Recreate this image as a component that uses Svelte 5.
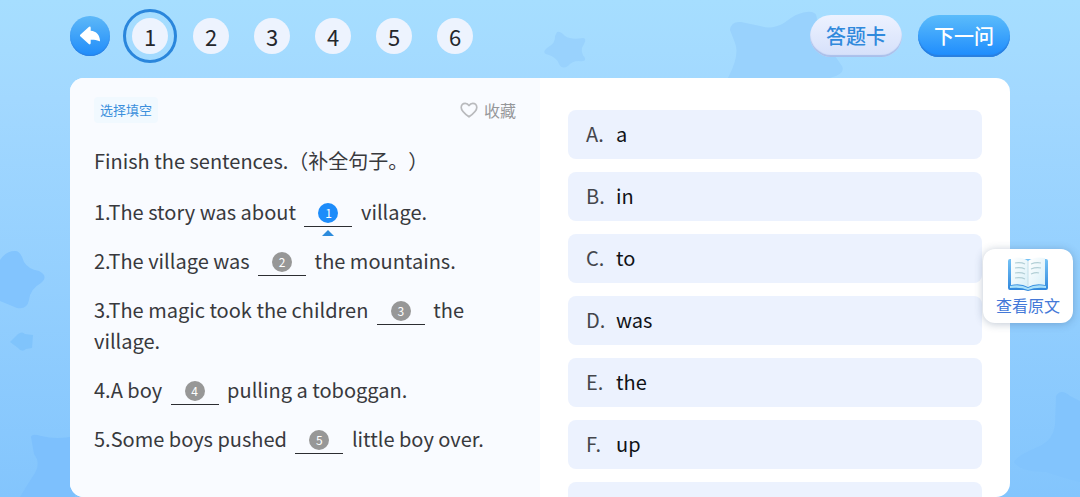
<script>
  const questions = [1, 2, 3, 4, 5, 6];
  let current = $state(1);
  let blank = $state(1);

  const sentences = [
    { id: 1, before: '1.The story was about', after: 'village.' },
    { id: 2, before: '2.The village was', after: 'the mountains.' },
    { id: 3, before: '3.The magic took the children', after: 'the village.' },
    { id: 4, before: '4.A boy', after: 'pulling a toboggan.' },
    { id: 5, before: '5.Some boys pushed', after: 'little boy over.' }
  ];

  const options = [
    ['A.', 'a'],
    ['B.', 'in'],
    ['C.', 'to'],
    ['D.', 'was'],
    ['E.', 'the'],
    ['F.', 'up'],
    ['', '']
  ];
</script>

<div class="page">
  <svg class="sky" viewBox="0 0 1080 497" preserveAspectRatio="none" aria-hidden="true">
    <g fill="#99d2fd">
      <path d="M557 32Q560 31 565 36Q571 40 583 38Q587 38 584 44Q579 51 585 58Q586 62 579 61Q572 61 568 66Q562 70 559 64Q557 57 546 54Q542 52 547 48Q556 43 555 36Z" />
      <path d="M730 30Q731 21 741 22L760 26Q772 30 784 23Q800 10 812 12Q820 14 815 28L842 66Q846 74 830 78H728Q740 55 735 43Z" />
    </g>
    <path fill="#82c4fe" d="M0 260Q7 250 16 251Q21 252 24 262Q28 269 39 271Q49 276 41 283Q30 289 29 300Q27 310 17 308L0 301Z" />
    <path fill="#80c4fc" d="M18 334Q22 331 25 334L33 335L32 348L26 349Q22 353 18 348L10 342Z" />
    <path fill="#7dc0fd" d="M31 437Q32 433 41 436Q57 440 75 436V497H20Q29 482 35 473Q41 463 34 454Z" />
    <path fill="#82c4fd" d="M1056 396Q1061 388 1070 396L1080 401V482Q1060 477 1046 472Q1020 472 1014 462Q1016 456 1040 446Q1053 440 1055 425Z" />
  </svg>

  <header>
    <button class="back" aria-label="返回">
      <svg viewBox="0 0 24 20" width="24" height="20">
        <path d="M10.800 .9Q12.600-.2 12.700 1.800V4.800C18.500 5.200 21.600 9 22 14.400Q22 15.600 21 15.100C18.500 13.900 16 13.600 12.700 13.700V17Q12.600 19.200 10.800 18.100L2.500 10.600Q1.400 9.500 2.500 8.400Z" fill="#fff" />
      </svg>
    </button>
    <nav>
      {#each questions as n}
        <button class="num" class:active={current === n} onclick={() => (current = n)}>{n}</button>
      {/each}
    </nav>
    <button class="pill card">答题卡</button>
    <button class="pill next">下一问</button>
  </header>

  <main>
    <section class="question">
      <div class="meta">
        <span class="tag">选择填空</span>
        <button class="fav">
          <svg viewBox="0 0 18 16" width="18" height="16">
            <path d="M9 14.800C5 12 1.200 9 1.200 5.500C1.200 3 3 1.300 5.200 1.300C6.900 1.300 8.200 2.200 9 3.600C9.800 2.200 11.100 1.300 12.800 1.300C15 1.300 16.800 3 16.800 5.500C16.800 9 13 12 9 14.800Z" fill="none" stroke="#b9babd" stroke-width="1.700" stroke-linejoin="round" />
          </svg>
          收藏
        </button>
      </div>
      <h1>Finish the sentences.（补全句子。）</h1>
      {#each sentences as s}
        <p>
          {s.before}
          <button class="blank" class:active={blank === s.id} onclick={() => (blank = s.id)}><span>{s.id}</span></button>
          {s.after}
        </p>
      {/each}
    </section>

    <section class="answers">
      {#each options as [letter, word]}
        <button class="option"><span class="letter">{letter}</span><span>{word}</span></button>
      {/each}
    </section>
  </main>

  <button class="source">
    <svg viewBox="0 0 42 34" width="42" height="34">
      <defs>
        <linearGradient id="cover" x1="0" y1="0" x2="0" y2="1">
          <stop offset="0" stop-color="#75c2f5" />
          <stop offset="1" stop-color="#2e86dc" />
        </linearGradient>
        <linearGradient id="leaf" x1="0" y1="0" x2="1" y2="1">
          <stop offset="0" stop-color="#ffffff" />
          <stop offset="1" stop-color="#d9f0f8" />
        </linearGradient>
      </defs>
      <path d="M1 4Q1 2 3 2H39Q41 2 41 4V31Q41 33 39 33H25L21 34L17 33H3Q1 33 1 31Z" fill="url(#cover)" />
      <path d="M3 29Q14 27 21 31Q28 27 39 29V31Q28 30 21 33Q14 30 3 31Z" fill="#a9e1fa" />
      <path d="M4 1Q15-1 21 4V30Q14 26 4 28Z" fill="url(#leaf)" />
      <path d="M38 1Q27-1 21 4V30Q28 26 38 28Z" fill="url(#leaf)" />
      <path d="M21 4V30" stroke="#c5e0ea" />
      <path d="M8 6Q14 5 18 7M8 11Q14 10 18 12M8 16Q14 15 18 17M8 21Q14 20 18 22M24 7Q29 5 34 6M24 12Q29 10 34 11M24 17Q29 15 32 16" fill="none" stroke="#b2cfd6" stroke-width="1.200" />
    </svg>
    查看原文
  </button>
</div>

<style>
  :global(body) {
    margin: 0;
  }
  .page {
    position: relative;
    box-sizing: border-box;
    height: 100vh;
    display: flex;
    flex-direction: column;
    padding: 0 70px;
    overflow: hidden;
    background: linear-gradient(#a6deff 0%, #a2d8ff 20%, #83c5fd 100%);
    font-family: "Noto Sans CJK SC", sans-serif;
    color: #38393d;
  }
  button {
    border: 0;
    padding: 0;
    background: none;
    font: inherit;
    color: inherit;
    cursor: pointer;
  }
  .sky {
    position: absolute;
    inset: 0;
    width: 100%;
    height: 100%;
  }
  header {
    position: relative;
    display: flex;
    align-items: center;
    padding-bottom: 6px;
    height: 72px;
    flex: none;
  }
  .back {
    display: grid;
    place-items: center;
    width: 40px;
    height: 40px;
    border-radius: 50%;
    background: linear-gradient(#5db8f8, #208cfa);
    box-shadow: inset 0 -1px 1px #2c7fe0;
  }
  nav {
    display: flex;
    gap: 25px;
    margin-left: 22px;
    margin-right: auto;
  }
  .num {
    width: 36px;
    height: 36px;
    border-radius: 50%;
    background: #edf3fe;
    font-size: 22px;
    line-height: 34px;
    color: #24272c;
  }
  .num.active {
    outline: 3px solid #2a86dc;
    outline-offset: 6px;
  }
  .pill {
    width: 92px;
    height: 42px;
    border-radius: 21px;
    font-size: 20px;
    font-weight: 500;
    line-height: 40px;
  }
  .card {
    margin-right: 16px;
    color: #3089dc;
    background: linear-gradient(#edf2ff, #d5e0fa);
    box-shadow: inset 0 -2px 1px #a9bfea;
  }
  .next {
    color: #fff;
    background: linear-gradient(#5bbcfb, #1d8bfd);
    box-shadow: inset 0 -2px 1px #2a7fdf;
  }
  main {
    position: relative;
    flex: 1;
    min-height: 0;
    display: grid;
    grid-template-columns: 1fr 1fr;
    border-radius: 14px;
    background: #fff;
    overflow: hidden;
  }
  .question {
    padding: 19px 24px;
    background: #f9fbff;
    overflow: hidden;
    font-size: 20px;
    line-height: 31px;
    text-spacing-trim: space-all;
  }
  .meta {
    display: flex;
    align-items: center;
    justify-content: space-between;
    height: 26px;
    margin-bottom: 22px;
  }
  .tag {
    padding: 0 6px;
    border-radius: 4px;
    background: #f1f9ff;
    font-size: 13px;
    line-height: 26px;
    color: #3b8fdc;
  }
  .fav {
    display: flex;
    align-items: center;
    gap: 6px;
    font-size: 16px;
    line-height: 26px;
    color: #96979a;
  }
  h1 {
    margin: 0 0 20px;
    font-size: 20px;
    font-weight: 400;
  }
  p {
    margin: 0 0 18px;
  }
  .blank {
    position: relative;
    display: inline-flex;
    justify-content: center;
    box-sizing: border-box;
    width: 48px;
    height: 24px;
    margin: 0 4px;
    border-bottom: 1px solid #2c2d31;
    vertical-align: bottom;
  }
  .blank span {
    width: 20px;
    height: 20px;
    border-radius: 50%;
    background: #979797;
    color: #fff;
    font-size: 12px;
    line-height: 20px;
  }
  .blank.active span {
    background: #1d8cfa;
  }
  .blank.active::after {
    content: "";
    position: absolute;
    top: 27px;
    left: 18px;
    border: 6px solid transparent;
    border-top: 0;
    border-bottom-color: #2d8bdc;
  }
  .answers {
    display: flex;
    flex-direction: column;
    gap: 13px;
    padding: 32px 28px;
    overflow: auto;
    scrollbar-width: none;
  }
  .option {
    display: flex;
    align-items: center;
    flex: none;
    box-sizing: border-box;
    height: 49px;
    padding: 0 18px 2px;
    border-radius: 8px;
    background: #ecf2fe;
    font-size: 20px;
    color: #101216;
  }
  .letter {
    width: 30px;
    text-align: left;
    color: #44464c;
  }
  .source {
    position: absolute;
    top: 249px;
    right: 7px;
    display: flex;
    flex-direction: column;
    align-items: center;
    gap: 1px;
    padding: 8px 13px 5px;
    border-radius: 12px;
    background: #fff;
    box-shadow: 0 1px 8px rgba(40, 70, 110, 0.3);
    font-size: 16px;
    line-height: 26px;
    color: #4479d8;
  }
</style>
